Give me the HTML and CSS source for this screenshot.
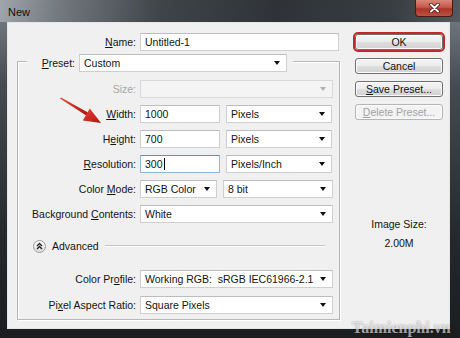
FILE: index.html
```html
<!DOCTYPE html>
<html lang="en">
<head>
  <meta charset="UTF-8">
  <title>New</title>
  <link rel="stylesheet" href="styles.css">
</head>
<body>
  <div class="window">
    <div class="titlebar">
      <span class="title">New</span>
      <button class="close">
        <svg width="11" height="10" viewBox="0 0 11 10"><path d="M2 1.5 L9 8.5 M9 1.5 L2 8.5" stroke="#3a0c08" stroke-width="3.4" stroke-linecap="round"/><path d="M2 1.5 L9 8.5 M9 1.5 L2 8.5" stroke="#fff" stroke-width="2" stroke-linecap="round"/></svg>
      </button>
    </div>

    <div class="client">
      <div class="main">
        <div class="row name-row">
          <span class="lbl"><u>N</u>ame:</span>
          <div class="field w200">Untitled-1</div>
        </div>

        <div class="group">
          <div class="group-head">
            <span class="lbl"><u>P</u>reset:</span>
            <div class="field select w208">Custom</div>
          </div>

          <div class="stack first">
            <div class="row">
              <span class="lbl disabled">Size:</span>
              <div class="field select off w193"></div>
            </div>
            <div class="row">
              <span class="lbl"><u>W</u>idth:</span>
              <div class="field w80">1000</div>
              <div class="field select w106">Pixels</div>
            </div>
            <div class="row">
              <span class="lbl">H<u>e</u>ight:</span>
              <div class="field w80">700</div>
              <div class="field select w106">Pixels</div>
            </div>
            <div class="row">
              <span class="lbl"><u>R</u>esolution:</span>
              <div class="field focus w80">300<span class="caret"></span></div>
              <div class="field select w106">Pixels/Inch</div>
            </div>
            <div class="row">
              <span class="lbl">Color <u>M</u>ode:</span>
              <div class="field select w77">RGB Color</div>
              <div class="field select w110">8 bit</div>
            </div>
            <div class="row">
              <span class="lbl">Background <u>C</u>ontents:</span>
              <div class="field select w193">White</div>
            </div>
          </div>

          <div class="advanced">
            <span class="toggle">
              <svg width="7" height="8" viewBox="0 0 7 8"><path d="M1 4 L3.5 1.5 L6 4 M1 7 L3.5 4.5 L6 7" fill="none" stroke="#222" stroke-width="1.3"/></svg>
            </span>
            <span>Advanced</span>
            <span class="rule"></span>
          </div>

          <div class="stack second">
            <div class="row">
              <span class="lbl">Color Pr<u>o</u>file:</span>
              <div class="field select w193">Working RGB:&nbsp; sRGB IEC61966-2.1</div>
            </div>
            <div class="row">
              <span class="lbl">Pi<u>x</u>el Aspect Ratio:</span>
              <div class="field select w193">Square Pixels</div>
            </div>
          </div>
        </div>
      </div>

      <div class="side">
        <button class="btn ok">OK</button>
        <button class="btn">Cancel</button>
        <button class="btn"><u>S</u>ave Preset...</button>
        <button class="btn" disabled><u>D</u>elete Preset...</button>
        <div class="size-info">
          <div>Image Size:</div>
          <div class="size-value">2.00M</div>
        </div>
      </div>
    </div>

    <svg class="pointer" width="52" height="40" viewBox="0 0 52 40">
      <defs>
        <linearGradient id="red" x1="0" y1="0" x2="1" y2="1">
          <stop offset="0" stop-color="#e8443c"/>
          <stop offset="1" stop-color="#b3120e"/>
        </linearGradient>
      </defs>
      <path d="M5 4.5 L6 3.6 L33 18.6 L31.6 21.8 Z" fill="url(#red)"/>
      <path d="M46 29 L27.8 26.4 L31.3 20.4 L34.8 14.4 Z" fill="url(#red)"/>
    </svg>

    <div class="watermark">Taimienphi.vn</div>
  </div>
</body>
</html>
```

FILE: styles.css
```css
body {
  margin: 0;
  font-family: "Liberation Sans", Arial, sans-serif;
  font-size: 10.5px;
  color: #141414;
}

.window {
  position: relative;
  width: 460px;
  height: 338px;
  overflow: hidden;
  display: flex;
  flex-direction: column;
  background: linear-gradient(180deg, #7c838a 0%, #454b50 25%, #25292c 70%, #1b1d1f 100%);
}

.titlebar {
  height: 22px;
  flex: none;
  display: flex;
  justify-content: space-between;
  align-items: flex-start;
  padding: 0 7px 0 8px;
  background: linear-gradient(100deg, #a0a6ab 0%, #757c82 12%, #3f4448 35%, #2f3337 60%, #383d41 85%, #555b60 100%);
}

.title {
  margin-top: 6px;
  font-size: 11px;
  color: #111;
}

.close {
  width: 38px;
  height: 17px;
  padding: 0;
  border: 1px solid #4a1a14;
  border-top: none;
  border-radius: 0 0 4px 4px;
  background: linear-gradient(180deg, #d9877a 0%, #c45a4a 45%, #a9352a 55%, #bd5142 100%);
  display: flex;
  align-items: center;
  justify-content: center;
}

.client {
  flex: 1;
  margin: 0 10px 9px 7px;
  background: #f0f0f0;
  border: 1px solid #e4e6e8;
  display: flex;
}

.main {
  width: 331px;
  padding-top: 10px;
}

.row {
  display: flex;
  align-items: center;
  gap: 6px;
  height: 18px;
}

.lbl {
  flex: none;
  width: 118px;
  margin-right: -2px;
  text-align: right;
  white-space: nowrap;
}

.name-row .lbl {
  width: 128px;
}

.disabled {
  color: #a6a6a6;
}

.field {
  box-sizing: border-box;
  height: 18px;
  padding: 0 4px;
  background: #fff;
  border: 1px solid #cfcfcf;
  border-top-color: #bdbdbd;
  display: flex;
  align-items: center;
  white-space: nowrap;
  overflow: hidden;
}

.select {
  justify-content: space-between;
}

.select::after {
  content: "";
  flex: none;
  margin: 0 2px 0 4px;
  border-top: 4px solid #111;
  border-left: 3.5px solid transparent;
  border-right: 3.5px solid transparent;
}

.select.off {
  justify-content: flex-end;
  background: #f4f4f4;
  border-color: #d9d9d9;
}

.select.off::after {
  border-top-color: #b0b0b0;
}

.focus {
  border-color: #8fb7df;
  border-top-color: #5e8fc2;
}

.caret {
  display: inline-block;
  width: 1px;
  height: 12px;
  margin-left: 1px;
  background: #000;
}

.w200 { width: 200px; }
.w208 { width: 208px; }
.w193 { width: 193px; }
.w80 { width: 80px; }
.w106 { width: 106px; }
.w77 { width: 77px; }
.w110 { width: 110px; }

.group {
  box-sizing: border-box;
  width: 323px;
  height: 259px;
  margin: 10px 0 0 9px;
  border: 1px solid #b7b7b7;
  box-shadow: inset 1px 1px 0 #fff, 1px 1px 0 #fff;
}

.group-head {
  display: flex;
  align-items: center;
  width: max-content;
  margin: -8px 0 0 9px;
  padding: 0 6px 0 12px;
  background: #f0f0f0;
}

.group-head .lbl {
  width: 36px;
  margin-right: 4px;
}

.stack {
  display: flex;
  flex-direction: column;
  gap: 7px;
}

.stack.first {
  margin-top: 8px;
}

.stack.second {
  margin-top: 17px;
  gap: 8px;
}

.advanced {
  display: flex;
  align-items: center;
  gap: 6px;
  height: 14px;
  margin: 16px 14px 0 15px;
}

.toggle {
  box-sizing: border-box;
  width: 13px;
  height: 13px;
  border: 1px solid #9c9c9c;
  border-radius: 50%;
  background: linear-gradient(180deg, #ffffff, #dcdcdc);
  display: flex;
  align-items: center;
  justify-content: center;
}

.rule {
  flex: 1;
  height: 1px;
  background: #c4c4c4;
  border-bottom: 1px solid #fff;
}

.side {
  width: 88px;
  margin-left: 16px;
  padding-top: 11px;
  display: flex;
  flex-direction: column;
  gap: 7px;
}

.btn {
  height: 16px;
  padding: 0;
  font: inherit;
  color: #141414;
  border: 1px solid #707070;
  border-radius: 3px;
  background: linear-gradient(180deg, #f4f4f4 0%, #ececec 48%, #dedede 52%, #d2d2d2 100%);
  box-shadow: inset 0 0 0 1px #fbfbfb;
}

.btn.ok {
  margin-bottom: 1px;
  outline: 2px solid #c3262c;
  outline-offset: 0;
}

.btn:disabled {
  color: #a3a3a3;
  border-color: #b2b6b9;
  background: #f3f3f3;
}

.size-info {
  margin-top: 91px;
  text-align: center;
  line-height: 13px;
}

.size-value {
  margin-top: 6px;
}

.pointer {
  position: absolute;
  left: 55px;
  top: 94px;
}

.watermark {
  position: absolute;
  left: 352px;
  top: 319px;
  font-family: "Liberation Serif", serif;
  font-size: 16px;
  font-weight: bold;
  line-height: 18px;
  color: rgba(255, 255, 255, 0.6);
  text-shadow: 0 0 2px rgba(0, 0, 0, 0.4);
  white-space: nowrap;
}
```
